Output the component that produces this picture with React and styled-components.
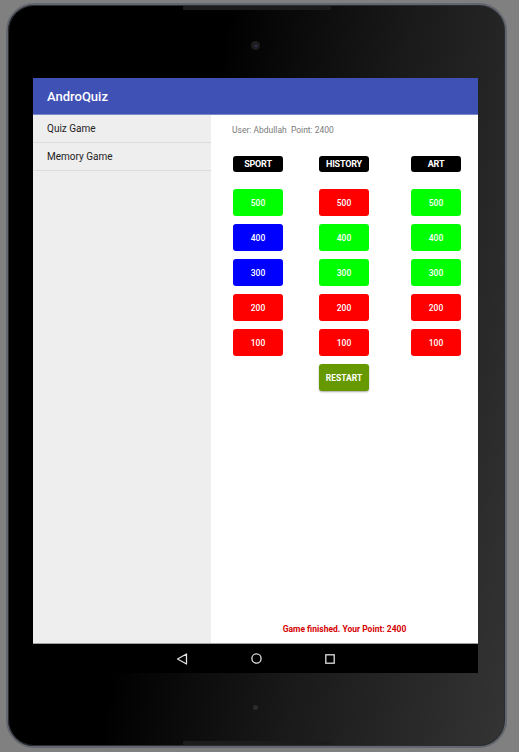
import styled, { createGlobalStyle } from "styled-components";

const GlobalStyle = createGlobalStyle`
  html, body {
    margin: 0;
    padding: 0;
    background: #808080;
  }
  * {
    box-sizing: border-box;
  }
`;

const columns = [
  {
    title: "SPORT",
    width: 86,
    values: [
      [500, "#00ff00"],
      [400, "#0000ff"],
      [300, "#0000ff"],
      [200, "#ff0000"],
      [100, "#ff0000"],
    ],
  },
  {
    title: "HISTORY",
    width: 92,
    values: [
      [500, "#ff0000"],
      [400, "#00ff00"],
      [300, "#00ff00"],
      [200, "#ff0000"],
      [100, "#ff0000"],
    ],
    restart: true,
  },
  {
    title: "ART",
    width: 50,
    values: [
      [500, "#00ff00"],
      [400, "#00ff00"],
      [300, "#00ff00"],
      [200, "#ff0000"],
      [100, "#ff0000"],
    ],
  },
];

function NavIcons() {
  return (
    <NavBar>
      <svg width="12" height="12" viewBox="0 0 12 12">
        <path d="M10.5 1 L1.5 6 L10.5 11 Z" fill="none" stroke="#e0e0e0" strokeWidth="1.3" strokeLinejoin="round" />
      </svg>
      <svg width="11" height="11" viewBox="0 0 11 11">
        <circle cx="5.5" cy="5.5" r="4.6" fill="none" stroke="#e0e0e0" strokeWidth="1.3" />
      </svg>
      <svg width="10" height="10" viewBox="0 0 10 10">
        <rect x="0.8" y="0.8" width="8.4" height="8.4" fill="none" stroke="#e0e0e0" strokeWidth="1.3" />
      </svg>
    </NavBar>
  );
}

export default function App() {
  return (
    <Page>
      <GlobalStyle />
      <Device>
        <Speaker $top />
        <TopBezel>
          <Camera />
        </TopBezel>
        <Screen>
          <AppBar>AndroQuiz</AppBar>
          <Body>
            <Drawer>
              <DrawerItem>Quiz Game</DrawerItem>
              <DrawerItem>Memory Game</DrawerItem>
            </Drawer>
            <Main>
              <UserLine>User: Abdullah&nbsp;&nbsp;Point: 2400</UserLine>
              <Board>
                {columns.map((col) => (
                  <Column key={col.title} $width={col.width}>
                    <Category>{col.title}</Category>
                    <Buttons>
                      {col.values.map(([points, color]) => (
                        <PointButton key={points} $color={color}>
                          {points}
                        </PointButton>
                      ))}
                      {col.restart && <RestartButton>RESTART</RestartButton>}
                    </Buttons>
                  </Column>
                ))}
              </Board>
              <Finished>Game finished. Your Point: 2400</Finished>
            </Main>
          </Body>
          <NavIcons />
        </Screen>
        <BottomBezel>
          <Dot />
        </BottomBezel>
        <Speaker />
      </Device>
    </Page>
  );
}

const Page = styled.div`
  width: 519px;
  height: 752px;
  padding: 3px 0 0 6px;
  font-family: Roboto, "Liberation Sans", sans-serif;
`;

const Device = styled.div`
  position: relative;
  width: 501px;
  height: 745px;
  border: 2px solid #63666e;
  border-radius: 28px;
  background: linear-gradient(100deg, #000 35%, #1a1a1a 65%, #343434 100%);
  box-shadow: inset 0 0 0 1px #2a2c30;
  padding-left: 25px;
  display: flex;
  flex-direction: column;
`;

const Speaker = styled.div`
  position: absolute;
  left: 175px;
  width: 148px;
  height: 4px;
  background: #1c1c1c;
  border-radius: 1px;
  ${(p) => (p.$top ? "top: 1px;" : "bottom: 1px;")}
`;

const TopBezel = styled.div`
  height: 73px;
  width: 445px;
  display: flex;
  justify-content: center;
  padding-top: 36px;
`;

const Camera = styled.div`
  width: 9px;
  height: 9px;
  border-radius: 50%;
  background: #1e1e1e;
  display: flex;
  align-items: center;
  justify-content: center;

  &::after {
    content: "";
    width: 2px;
    height: 2px;
    border-radius: 50%;
    background: #33406b;
  }
`;

const Screen = styled.div`
  width: 445px;
  height: 595px;
  display: flex;
  flex-direction: column;
  background: #000;
`;

const AppBar = styled.div`
  height: 37px;
  flex-shrink: 0;
  background: #3f51b5;
  color: #fff;
  font-size: 13px;
  font-weight: 500;
  padding-left: 14px;
  display: flex;
  align-items: center;
  border-bottom: 1px solid #7c88c9;
  position: relative;
  z-index: 1;
`;

const Body = styled.div`
  flex: 1;
  display: flex;
  border-bottom: 1px solid #9e9e9e;
`;

const Drawer = styled.div`
  width: 178px;
  background: #eeeeee;
`;

const DrawerItem = styled.div`
  height: 28px;
  padding-left: 14px;
  display: flex;
  align-items: center;
  font-size: 10px;
  color: #222;
  border-bottom: 1px solid #dcdcdc;
`;

const Main = styled.div`
  flex: 1;
  background: #fff;
  display: flex;
  flex-direction: column;
  padding: 10px 0 9px 21px;
`;

const UserLine = styled.div`
  font-size: 8.5px;
  color: #7a7a7a;
  line-height: 10px;
`;

const Board = styled.div`
  display: flex;
  margin-top: 21px;
  padding-left: 1px;
`;

const Column = styled.div`
  width: ${(p) => p.$width}px;
  display: flex;
  flex-direction: column;
`;

const Category = styled.div`
  width: 50px;
  height: 16px;
  border-radius: 3px;
  background: #000;
  color: #fff;
  font-size: 9px;
  font-weight: 700;
  letter-spacing: -0.2px;
  display: flex;
  align-items: center;
  justify-content: center;
`;

const Buttons = styled.div`
  margin-top: 17px;
  display: flex;
  flex-direction: column;
  gap: 8px;
`;

const PointButton = styled.div`
  width: 50px;
  height: 27px;
  border-radius: 3px;
  background: ${(p) => p.$color};
  color: #fff;
  font-size: 8.5px;
  font-weight: 500;
  display: flex;
  align-items: center;
  justify-content: center;
`;

const RestartButton = styled(PointButton)`
  background: #669900;
  font-weight: 700;
  font-size: 8.5px;
  box-shadow: 0 1px 2px rgba(0, 0, 0, 0.35);
`;

const Finished = styled.div`
  margin-top: auto;
  margin-left: -21px;
  text-align: center;
  color: #d50000;
  font-size: 8.5px;
  font-weight: 700;
`;

const NavBar = styled.div`
  height: 29px;
  flex-shrink: 0;
  background: #000;
  display: flex;
  align-items: center;
  justify-content: center;
  gap: 63px;
`;

const BottomBezel = styled.div`
  flex: 1;
  width: 445px;
  display: flex;
  justify-content: center;
  padding-top: 32px;
`;

const Dot = styled.div`
  width: 5px;
  height: 5px;
  border-radius: 50%;
  background: #2c2c2c;
`;
